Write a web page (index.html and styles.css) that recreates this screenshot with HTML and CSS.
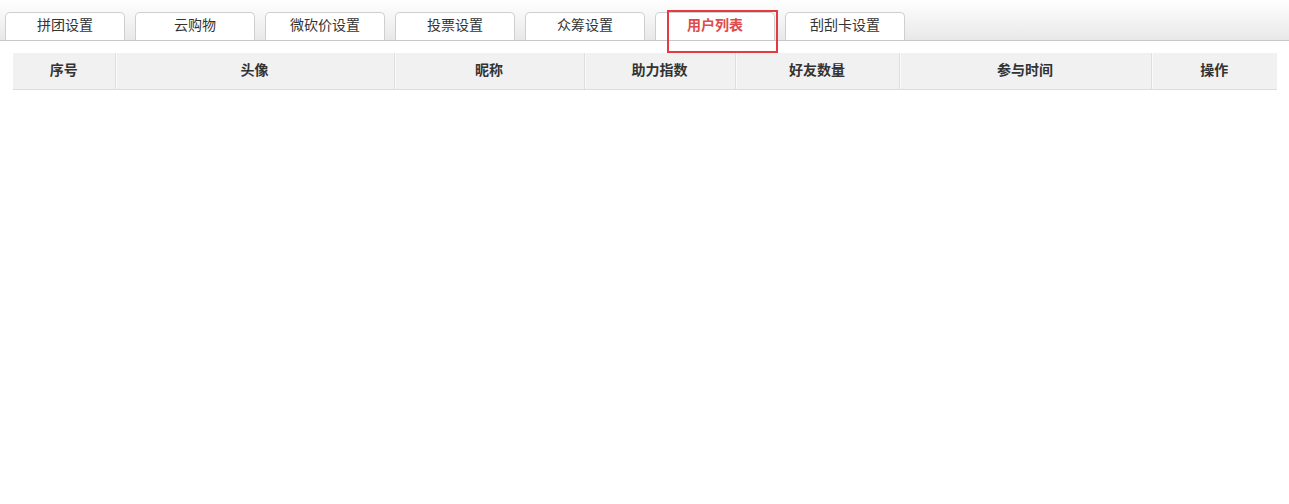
FILE: index.html
```html
<!DOCTYPE html>
<html lang="zh-CN">
<head>
    <meta charset="UTF-8">
    <title>用户列表</title>
    <link rel="stylesheet" href="styles.css">
</head>
<body>
    <div class="tab-bar">
        <ul class="tabs">
            <li class="tab">拼团设置</li>
            <li class="tab">云购物</li>
            <li class="tab">微砍价设置</li>
            <li class="tab">投票设置</li>
            <li class="tab">众筹设置</li>
            <li class="tab active">用户列表<span class="highlight"></span></li>
            <li class="tab">刮刮卡设置</li>
        </ul>
    </div>

    <div class="content">
        <table class="list">
            <thead>
                <tr>
                    <th class="col-no">序号</th>
                    <th class="col-avatar">头像</th>
                    <th class="col-name">昵称</th>
                    <th class="col-help">助力指数</th>
                    <th class="col-friends">好友数量</th>
                    <th class="col-time">参与时间</th>
                    <th class="col-op">操作</th>
                </tr>
            </thead>
            <tbody></tbody>
        </table>
    </div>
</body>
</html>
```

FILE: styles.css
```css
* {
    margin: 0;
    padding: 0;
    box-sizing: border-box;
}

body {
    font-family: "SimSun", "Noto Sans CJK SC", sans-serif;
    font-size: 14px;
    color: #333;
    background: #fff;
}

.tab-bar {
    height: 41px;
    padding: 12px 0 0 5px;
    background: linear-gradient(#ffffff, #e8e8e8);
    border-bottom: 1px solid #c9c9c9;
}

.tabs {
    list-style: none;
    display: flex;
    gap: 10px;
}

.tab {
    position: relative;
    width: 120px;
    height: 28px;
    line-height: 23px;
    text-align: center;
    background: #fff;
    border: 1px solid #cfcfcf;
    border-bottom: none;
    border-radius: 5px 5px 0 0;
    color: #333;
}

.tab.active {
    color: #e04a48;
    font-weight: bold;
}

.highlight {
    position: absolute;
    left: 11px;
    top: -3px;
    width: 111px;
    height: 43px;
    border: 2px solid #e53a3f;
}

.content {
    padding: 12px 12px 0 13px;
}

.list {
    width: 100%;
    border-collapse: collapse;
    table-layout: fixed;
}

.list th {
    height: 36px;
    padding-bottom: 3px;
    background: #f1f1f1;
    border-bottom: 1px solid #dcdcdc;
    border-left: 1px solid #dedede;
    box-shadow: inset 1px 0 0 #fafafa;
    font-weight: bold;
    text-align: center;
    color: #333;
}

.list th:first-child {
    border-left: none;
    box-shadow: none;
}

.col-no { width: 102px; }
.col-avatar { width: 279px; }
.col-name { width: 190px; }
.col-help { width: 151px; }
.col-friends { width: 164px; }
.col-time { width: 252px; }
.col-op { width: 126px; }
```
